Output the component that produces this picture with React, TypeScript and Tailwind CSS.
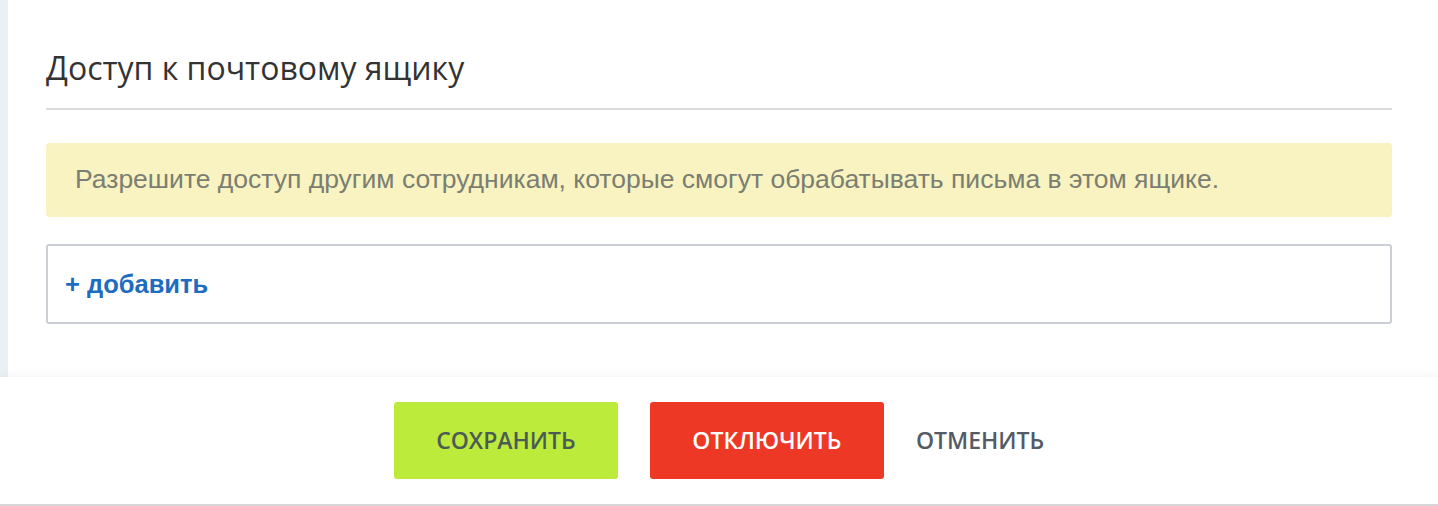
export default function App() {
  return (
    <div className="flex h-[506px] w-full flex-col bg-white">
      {/* Основная область */}
      <div className="flex flex-1">
        <div className="w-2 shrink-0 bg-[#e9f1f4]" />
        <div className="flex-1 pl-[38px] pr-[46px] pt-[48px]">
          <h2 className="font-['Open_Sans',sans-serif] text-[32px] leading-[40px] text-[#333333]">
            Доступ к почтовому ящику
          </h2>
          <div className="mt-[20px] h-[2px] bg-[#dcdcdc]" />
          <div className="mt-[33px] flex h-[74px] items-center rounded-[4px] bg-[#f8f3c0] px-[29px] font-['Liberation_Sans',Arial,sans-serif] text-[26.5px] text-[#7b7e72]">
            Разрешите доступ другим сотрудникам, которые смогут обрабатывать письма в этом ящике.
          </div>
          <div className="mt-[27px] flex h-[80px] items-center rounded-[3px] border-2 border-[#cbced4] px-[17px]">
            <button className="font-['Liberation_Sans',Arial,sans-serif] text-[25.5px] font-bold text-[#1e6cc0]">
              + добавить
            </button>
          </div>
        </div>
      </div>

      {/* Нижняя панель */}
      <div className="flex h-[129px] shrink-0 items-center justify-center gap-8 border-b-2 border-[#d6d6d6] bg-white shadow-[0_-3px_8px_rgba(0,0,0,0.04)] font-['Open_Sans',sans-serif] text-[23px] font-semibold">
        <button className="h-[77px] w-[224px] rounded-[3px] bg-[#bdeb3c] text-[#4c5a56]">СОХРАНИТЬ</button>
        <button className="h-[77px] w-[234px] rounded-[3px] bg-[#ee3826] text-white">ОТКЛЮЧИТЬ</button>
        <button className="text-[#535b65]">ОТМЕНИТЬ</button>
      </div>
    </div>
  )
}
